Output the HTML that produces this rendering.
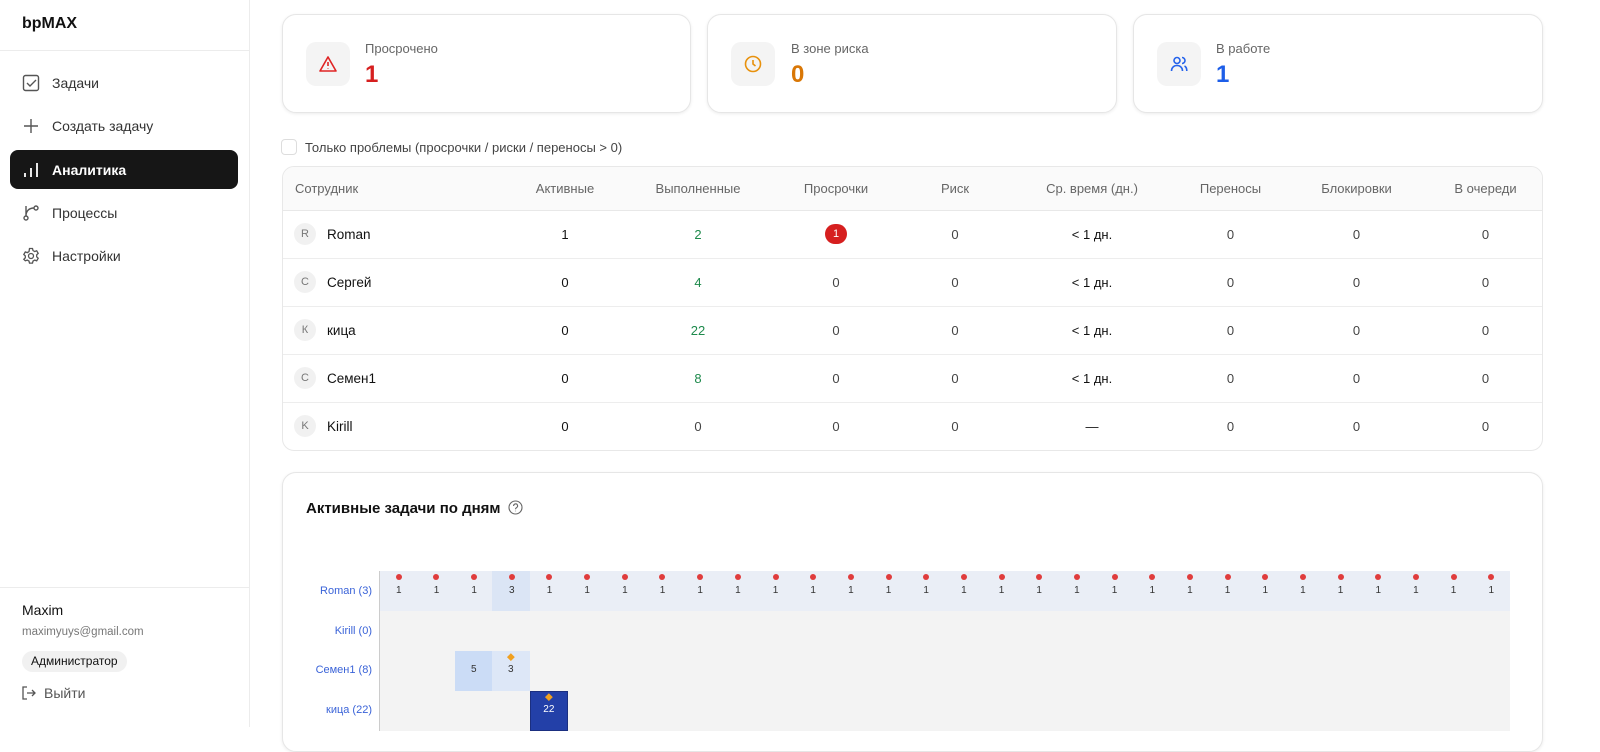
<!DOCTYPE html>
<html><head><meta charset="utf-8"><style>
*{box-sizing:border-box;margin:0;padding:0}
body{width:1600px;height:727px;overflow:hidden;background:#fff;font-family:"Liberation Sans","Noto Sans CJK SC",sans-serif;color:#111;position:relative}
.a{position:absolute}
.side{left:0;top:0;width:250px;height:727px;border-right:1px solid #ececec;background:#fff}
.nav{left:10px;width:228px;height:39px;border-radius:8px;display:flex;align-items:center;padding-left:12px;font-size:14px;color:#333}
.nav svg{margin-right:12px}
.card{background:#fff;border:1px solid #e6e6e6;border-radius:14px;box-shadow:0 1px 3px rgba(0,0,0,.08)}
.ic{width:44px;height:44px;border-radius:10px;background:#f4f4f4;display:flex;align-items:center;justify-content:center}
.lbl{font-size:13px;color:#666}
.big{font-size:24px;font-weight:bold}
table{border-collapse:collapse;width:100%;font-size:13px}
th{font-weight:normal;color:#666;height:43px;background:#fafafa;border-bottom:1px solid #e8e8e8;text-align:center}
td{height:48px;border-bottom:1px solid #ededed;text-align:center;color:#444;vertical-align:middle}
tr:last-child td{border-bottom:none}
.nmc{display:flex;align-items:center}
.av{display:inline-block;width:22px;height:22px;border-radius:50%;background:#f1f1f1;color:#777;font-size:11px;line-height:22px;text-align:center;margin-right:11px}
.nm{color:#111;font-size:13.5px}
.g{color:#1e8a4c}
.k{color:#111}
.rl{font-size:11px;color:#3a63d8;text-align:right;width:80px;left:292px}
.cell{position:absolute;width:37.67px;font-size:10px;text-align:center;color:#333}
</style></head><body>
<div class="a side">
 <div class="a" style="left:22px;top:15px;font-size:16px;font-weight:bold">bpMAX</div>
 <div class="a" style="left:0;top:50px;width:250px;border-top:1px solid #ececec"></div>
 <div class="a nav" style="top:63px"><svg width="18" height="18" viewBox="0 0 18 18" fill="none" stroke="#555" stroke-width="1.4"><rect x="1.5" y="1.5" width="15" height="15" rx="2"/><path d="M5 9l3 3 6-6"/></svg>Задачи</div>
 <div class="a nav" style="top:106px"><svg width="18" height="18" viewBox="0 0 18 18" stroke="#555" stroke-width="1.4"><path d="M9 2v14M2 9h14"/></svg>Создать задачу</div>
 <div class="a nav" style="top:150px;background:#161616;color:#fff;font-weight:bold"><svg width="18" height="18" viewBox="0 0 18 18" stroke="#fff" stroke-width="1.8"><path d="M3 16v-4M9 16V7M15 16V2"/></svg>Аналитика</div>
 <div class="a nav" style="top:193px"><svg width="18" height="18" viewBox="0 0 18 18" fill="none" stroke="#555" stroke-width="1.4"><circle cx="4" cy="14" r="2"/><circle cx="14" cy="4" r="2"/><path d="M4 2v10M12 4c-5 0-8 3-8 8"/></svg>Процессы</div>
 <div class="a nav" style="top:236px"><svg width="18" height="18" viewBox="0 0 18 18" fill="none" stroke="#555" stroke-width="1.3"><circle cx="9" cy="9" r="2.5"/><path d="M7.5 1.5h3l.5 2 1.7 1 2-.7 1.5 2.6-1.5 1.4v2l1.5 1.4-1.5 2.6-2-.7-1.7 1-.5 2h-3l-.5-2-1.7-1-2 .7L1.8 12.3l1.5-1.4v-2L1.8 7.5l1.5-2.6 2 .7 1.7-1z"/></svg>Настройки</div>
 <div class="a" style="left:0;top:587px;width:250px;border-top:1px solid #ececec"></div>
 <div class="a" style="left:22px;top:602px;font-size:14px">Maxim</div>
 <div class="a" style="left:22px;top:626px;font-size:11.5px;color:#777">maximyuys@gmail.com</div>
 <div class="a" style="left:22px;top:651px;height:21px;padding:0 9px;border-radius:11px;background:#f1f1f1;font-size:12px;line-height:21px">Администратор</div>
 <div class="a" style="left:21px;top:685px;font-size:14px;color:#555;display:flex;align-items:center"><svg width="16" height="16" viewBox="0 0 16 16" fill="none" stroke="#555" stroke-width="1.3"><path d="M6 2H2v12h4M6 8h8M11 5l3 3-3 3"/></svg><span style="margin-left:7px">Выйти</span></div>
</div>

<div class="a card" style="left:282px;top:14px;width:409px;height:99px"></div>
<div class="a ic" style="left:306px;top:42px"><svg width="20" height="20" viewBox="0 0 20 20" fill="none" stroke="#e02424" stroke-width="1.6"><path d="M10 3L2 17h16z" stroke-linejoin="round"/><path d="M10 8v4M10 14.5v.5"/></svg></div>
<div class="a lbl" style="left:365px;top:41px">Просрочено</div>
<div class="a big" style="left:365px;top:61px;color:#d61f1f">1</div>

<div class="a card" style="left:707px;top:14px;width:410px;height:99px"></div>
<div class="a ic" style="left:731px;top:42px"><svg width="20" height="20" viewBox="0 0 20 20" fill="none" stroke="#e8910c" stroke-width="1.6"><circle cx="10" cy="10" r="7.5"/><path d="M10 6v4l2.5 2"/></svg></div>
<div class="a lbl" style="left:791px;top:41px">В зоне риска</div>
<div class="a big" style="left:791px;top:61px;color:#d97706">0</div>

<div class="a card" style="left:1133px;top:14px;width:410px;height:99px"></div>
<div class="a ic" style="left:1157px;top:42px"><svg width="20" height="20" viewBox="0 0 20 20" fill="none" stroke="#2563eb" stroke-width="1.6"><circle cx="8" cy="6.5" r="3"/><path d="M2.5 17c0-3.5 2.5-5.5 5.5-5.5s5.5 2 5.5 5.5M13 3.5a3 3 0 010 6M15.5 12c1.5.7 2.3 2.5 2.3 5"/></svg></div>
<div class="a lbl" style="left:1216px;top:41px">В работе</div>
<div class="a big" style="left:1216px;top:61px;color:#1d5ee8">1</div>

<div class="a" style="left:281px;top:139px;width:16px;height:16px;border:1px solid #ddd;border-radius:4px"></div>
<div class="a" style="left:305px;top:140px;font-size:13px;color:#444">Только проблемы (просрочки / риски / переносы &gt; 0)</div>

<div class="a" style="left:282px;top:166px;width:1261px;border:1px solid #e8e8e8;border-radius:12px;overflow:hidden">
<table>
<colgroup><col style="width:220px"><col style="width:124px"><col style="width:142px"><col style="width:134px"><col style="width:104px"><col style="width:170px"><col style="width:107px"><col style="width:145px"><col></colgroup>
<tr><th style="text-align:left;padding-left:12px">Сотрудник</th><th>Активные</th><th>Выполненные</th><th>Просрочки</th><th>Риск</th><th>Ср. время (дн.)</th><th>Переносы</th><th>Блокировки</th><th>В очереди</th></tr>
<tr><td style="text-align:left;padding-left:11px"><div class="nmc"><span class="av">R</span><span class="nm">Roman</span></div></td><td class="k">1</td><td class="g">2</td><td><span style="display:inline-block;width:22px;height:20px;border-radius:10px;background:#d61f1f;color:#fff;font-size:11px;line-height:20px">1</span></td><td>0</td><td class="k">&lt; 1 дн.</td><td>0</td><td>0</td><td>0</td></tr>
<tr><td style="text-align:left;padding-left:11px"><div class="nmc"><span class="av">С</span><span class="nm">Сергей</span></div></td><td class="k">0</td><td class="g">4</td><td>0</td><td>0</td><td class="k">&lt; 1 дн.</td><td>0</td><td>0</td><td>0</td></tr>
<tr><td style="text-align:left;padding-left:11px"><div class="nmc"><span class="av">К</span><span class="nm">кица</span></div></td><td class="k">0</td><td class="g">22</td><td>0</td><td>0</td><td class="k">&lt; 1 дн.</td><td>0</td><td>0</td><td>0</td></tr>
<tr><td style="text-align:left;padding-left:11px"><div class="nmc"><span class="av">С</span><span class="nm">Семен1</span></div></td><td class="k">0</td><td class="g">8</td><td>0</td><td>0</td><td class="k">&lt; 1 дн.</td><td>0</td><td>0</td><td>0</td></tr>
<tr><td style="text-align:left;padding-left:11px"><div class="nmc"><span class="av">K</span><span class="nm">Kirill</span></div></td><td class="k">0</td><td>0</td><td>0</td><td>0</td><td class="k">—</td><td>0</td><td>0</td><td>0</td></tr>
</table></div>

<div class="a card" style="left:282px;top:472px;width:1261px;height:280px"></div>
<div class="a" style="left:306px;top:500px;font-size:15px;font-weight:bold;color:#111">Активные задачи по дням <svg style="vertical-align:-2px;margin-left:3px" width="15" height="15" viewBox="0 0 15 15" fill="none" stroke="#666" stroke-width="1.1"><circle cx="7.5" cy="7.5" r="6.5"/><path d="M5.6 6a2 2 0 113 1.6c-.7.4-1.1.8-1.1 1.6M7.5 10.8v.4"/></svg></div>

<div class="a" style="left:380px;top:571px;width:1130px;height:40px;background:#eaeef6"></div>
<div class="a" style="left:380px;top:611px;width:1130px;height:120px;background:#f3f3f3"></div>
<div class="a" style="left:379px;top:571px;width:1px;height:160px;background:#ccc"></div>
<div class="a" style="left:492px;top:571px;width:38px;height:40px;background:#dbe5f5"></div>
<div class="a" style="left:455px;top:651px;width:37px;height:40px;background:#cbdcf6"></div>
<div class="a" style="left:492px;top:651px;width:38px;height:40px;background:#dde7f7"></div>
<div class="a" style="left:530px;top:691px;width:38px;height:40px;background:#2340a8;border:1px solid #1b2f80"></div>
<div class="a rl" style="top:585px">Roman (3)</div>
<div class="a rl" style="top:625px">Kirill (0)</div>
<div class="a rl" style="top:664px">Семен1 (8)</div>
<div class="a rl" style="top:704px">кица (22)</div>
<div id="r"></div>
<div class="cell" style="left:455px;top:664px">5</div>
<div class="cell" style="left:492px;top:664px">3</div>
<div class="cell" style="left:492px;top:652px;color:#f0a020;font-size:8px">◆</div>
<div class="cell" style="left:530px;top:692px;color:#f0a020;font-size:8px">◆</div>
<div class="cell" style="left:530px;top:704px;color:#fff">22</div>
<script>
var h='';for(var i=0;i<30;i++){var x=380+i*37.67;h+='<div class="a" style="left:'+(x+15.8)+'px;top:574px;width:6px;height:6px;border-radius:50%;background:#e03c3c"></div><div class="cell" style="left:'+x+'px;top:585px">'+(i==3?3:1)+'</div>';}
document.getElementById('r').innerHTML=h;
</script>
</body></html>
